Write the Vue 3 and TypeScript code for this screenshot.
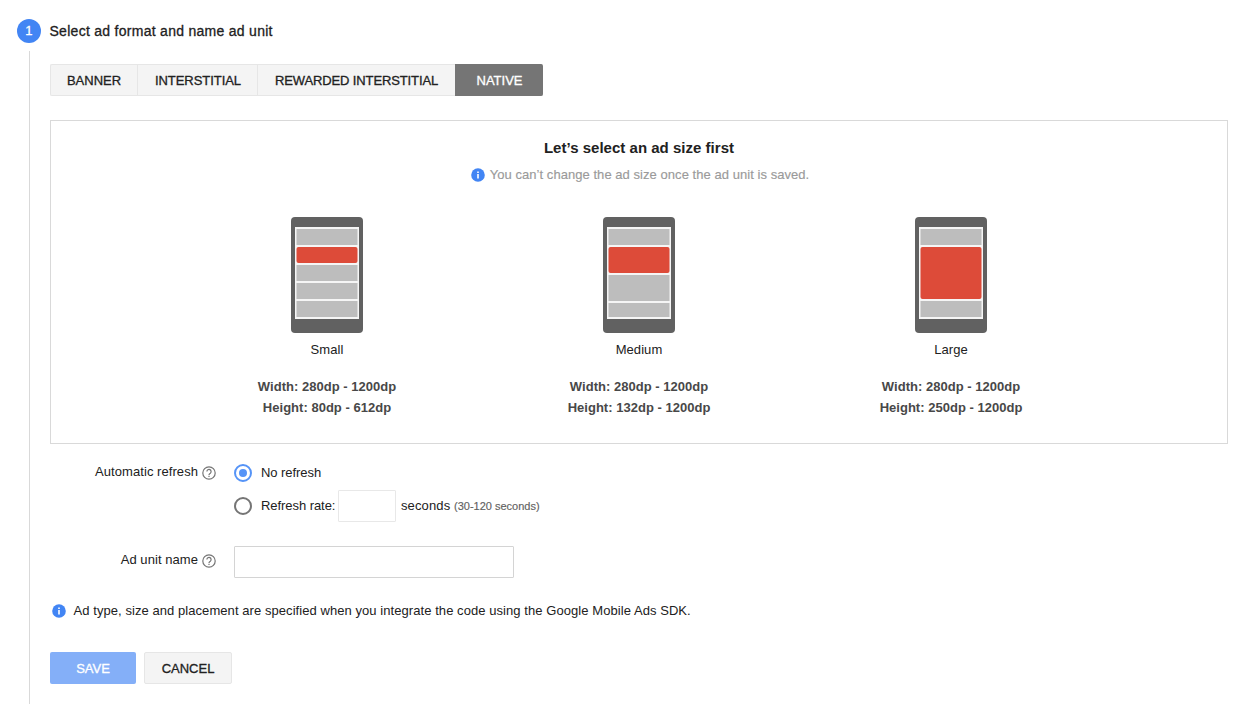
<script setup lang="ts">
import { ref } from 'vue'

interface Row { height: number; ad?: boolean }
interface AdSize { name: string; width: string; height: string; rows: Row[] }

const formats = [
  { id: 'banner', label: 'BANNER' },
  { id: 'interstitial', label: 'INTERSTITIAL' },
  { id: 'rewarded', label: 'REWARDED INTERSTITIAL' },
  { id: 'native', label: 'NATIVE' },
]
const selected = ref('native')

const sizes: AdSize[] = [
  {
    name: 'Small', width: '280dp - 1200dp', height: '80dp - 612dp',
    rows: [{ height: 16 }, { height: 16, ad: true }, { height: 16 }, { height: 16 }, { height: 16 }],
  },
  {
    name: 'Medium', width: '280dp - 1200dp', height: '132dp - 1200dp',
    rows: [{ height: 16 }, { height: 26, ad: true }, { height: 26 }, { height: 14 }],
  },
  {
    name: 'Large', width: '280dp - 1200dp', height: '250dp - 1200dp',
    rows: [{ height: 16 }, { height: 52, ad: true }, { height: 16 }],
  },
]

const refresh = ref('none')
const rate = ref('')
const unitName = ref('')
</script>

<template>
  <div class="page">
    <aside class="rail">
      <div class="badge">1</div>
      <div class="line"></div>
    </aside>
    <main class="content">
      <h1 class="title">Select ad format and name ad unit</h1>

      <div class="tabs">
        <button
          v-for="f in formats"
          :key="f.id"
          class="tab"
          :class="[f.id, { active: f.id === selected }]"
          @click="selected = f.id"
        >{{ f.label }}</button>
      </div>

      <section class="panel">
        <h2 class="panel-title">Let’s select an ad size first</h2>
        <p class="hint">
          <svg class="info" viewBox="0 0 14 14">
            <circle cx="7" cy="7" r="6.8" fill="#4285f4" />
            <path d="M6.2 3.5h1.6v1.5H6.2zM6.2 6.1h1.6v4.3H6.2z" fill="#fff" />
          </svg>
          <span>You can’t change the ad size once the ad unit is saved.</span>
        </p>
        <div class="sizes">
          <div v-for="s in sizes" :key="s.name" class="size">
            <div class="phone">
              <div class="screen">
                <div
                  v-for="(r, i) in s.rows"
                  :key="i"
                  class="row"
                  :class="{ ad: r.ad }"
                  :style="{ height: r.height + 'px' }"
                ></div>
              </div>
            </div>
            <div class="size-name">{{ s.name }}</div>
            <div class="dims">
              <div>Width: {{ s.width }}</div>
              <div>Height: {{ s.height }}</div>
            </div>
          </div>
        </div>
      </section>

      <div class="field refresh">
        <div class="label">
          <span>Automatic refresh</span>
          <svg class="help" viewBox="0 0 14 14">
            <circle cx="7" cy="7" r="6.2" fill="none" stroke="#757575" stroke-width="1.2" />
            <path d="M4.9 5.6a2.1 2.1 0 1 1 3.4 1.6C7.5 7.8 7 8 7 8.9" fill="none" stroke="#757575" stroke-width="1.2" />
            <path d="M6.4 9.8h1.2v1.2H6.4z" fill="#757575" />
          </svg>
        </div>
        <div class="options">
          <label class="option first" @click="refresh = 'none'">
            <span class="radio" :class="{ on: refresh === 'none' }"></span>
            <span class="option-text">No refresh</span>
          </label>
          <div class="option" @click="refresh = 'rate'">
            <span class="radio" :class="{ on: refresh === 'rate' }"></span>
            <span class="option-text rate-label">Refresh rate:</span>
            <input v-model="rate" class="rate-input" type="text" />
            <span class="option-text seconds">seconds</span>
            <span class="range">(30-120 seconds)</span>
          </div>
        </div>
      </div>

      <div class="field name">
        <div class="label">
          <span>Ad unit name</span>
          <svg class="help" viewBox="0 0 14 14">
            <circle cx="7" cy="7" r="6.2" fill="none" stroke="#757575" stroke-width="1.2" />
            <path d="M4.9 5.6a2.1 2.1 0 1 1 3.4 1.6C7.5 7.8 7 8 7 8.9" fill="none" stroke="#757575" stroke-width="1.2" />
            <path d="M6.4 9.8h1.2v1.2H6.4z" fill="#757575" />
          </svg>
        </div>
        <input v-model="unitName" class="name-input" type="text" />
      </div>

      <p class="note">
        <svg class="info" viewBox="0 0 14 14">
          <circle cx="7" cy="7" r="6.8" fill="#4285f4" />
          <path d="M6.2 3.5h1.6v1.5H6.2zM6.2 6.1h1.6v4.3H6.2z" fill="#fff" />
        </svg>
        <span>Ad type, size and placement are specified when you integrate the code using the Google Mobile Ads SDK.</span>
      </p>

      <div class="actions">
        <button class="save">SAVE</button>
        <button class="cancel">CANCEL</button>
      </div>
    </main>
  </div>
</template>

<style>
body {
  background: #fff;
  overflow: hidden;
}
</style>

<style scoped>
.page,
.page * {
  box-sizing: border-box;
}
.page {
  display: flex;
  width: 1258px;
  height: 707px;
  font: 13px/15px "Liberation Sans", Arial, sans-serif;
  letter-spacing: 0.06px;
  color: #212121;
  white-space: nowrap;
}
h1, h2, p {
  margin: 0;
}
button, input {
  font: inherit;
  letter-spacing: inherit;
  color: inherit;
  padding: 0;
  margin: 0;
  outline: none;
}
svg {
  display: block;
  flex: none;
}
.rail {
  width: 50px;
  padding: 19px 0 3px 17px;
  display: flex;
  flex-direction: column;
}
.badge {
  width: 24px;
  height: 24px;
  border-radius: 50%;
  background: #4285f4;
  color: #fff;
  line-height: 24px;
  text-align: center;
  -webkit-text-stroke: 0.3px;
}
.line {
  flex: 1;
  width: 1px;
  margin: 8px 0 0 12px;
  background: #d9d9d9;
}
.content {
  width: 1178px;
  padding-top: 23px;
}
.title {
  font-size: 14px;
  line-height: 16px;
  font-weight: 400;
  letter-spacing: 0.28px;
  text-indent: -0.5px;
  -webkit-text-stroke: 0.3px;
}
.tabs {
  display: flex;
  margin-top: 25px;
  height: 32px;
}
.tab {
  border: 1px solid #e6e6e6;
  border-right-width: 0;
  background: #f4f4f4;
  letter-spacing: 0;
  -webkit-text-stroke: 0.3px;
}
.banner {
  width: 87px;
  border-radius: 2px 0 0 2px;
}
.interstitial {
  width: 120px;
  padding-left: 1px;
  letter-spacing: -0.05px;
}
.rewarded {
  width: 198px;
  letter-spacing: -0.12px;
}
.native {
  width: 88px;
  border-radius: 0 2px 2px 0;
}
.tab.active {
  background: #757575;
  border-color: #757575;
  color: #fff;
}
.panel {
  margin-top: 24px;
  height: 324px;
  border: 1px solid #d9d9d9;
  padding-top: 18px;
}
.panel-title {
  font-size: 15px;
  line-height: 17px;
  letter-spacing: 0.02px;
  text-align: center;
}
.hint {
  display: flex;
  justify-content: center;
  align-items: center;
  gap: 5px;
  margin-top: 11px;
  padding-left: 2px;
  letter-spacing: 0.05px;
  color: #9a9a9a;
  -webkit-text-stroke: 0.15px;
}
.info {
  width: 14px;
  height: 14px;
  position: relative;
  top: 0.5px;
}
.sizes {
  display: flex;
  justify-content: center;
  margin-top: 35px;
}
.size {
  width: 312px;
  display: flex;
  flex-direction: column;
  align-items: center;
}
.phone {
  width: 72px;
  height: 116px;
  border-radius: 4px;
  background: #616161;
  padding: 10px 4px;
}
.screen {
  height: 92px;
  background: #f5f5f5;
  padding: 2px 1px 2px 2px;
  display: flex;
  flex-direction: column;
  gap: 2px;
}
.row {
  background: #bdbdbd;
  transform: translateX(-0.5px);
}
.row.ad {
  background: #dd4b39;
  border-radius: 2px;
}
.size-name {
  margin-top: 9px;
}
.dims {
  margin-top: 19px;
  line-height: 21px;
  font-weight: 700;
  letter-spacing: 0.02px;
  text-align: center;
  color: #484848;
}
.field {
  display: flex;
}
.label {
  width: 166px;
  display: flex;
  justify-content: flex-end;
  gap: 4px;
}
.help {
  width: 14px;
  height: 14px;
  margin-top: 2px;
}
.refresh {
  margin-top: 20px;
}
.options {
  margin-left: 18px;
}
.option {
  display: flex;
  align-items: center;
  height: 32px;
}
.option.first {
  height: 18px;
  margin-bottom: 8px;
}
.option-text {
  padding-bottom: 2px;
  letter-spacing: -0.06px;
}
.radio {
  width: 18px;
  height: 18px;
  border: 2px solid #757575;
  border-radius: 50%;
  margin-right: 9px;
  display: flex;
  align-items: center;
  justify-content: center;
}
.radio.on {
  border-color: #5694f7;
}
.radio.on::after {
  content: "";
  width: 8px;
  height: 8px;
  border-radius: 50%;
  background: #5694f7;
}
.rate-label {
  width: 77px;
}
.rate-input {
  width: 58px;
  height: 32px;
  border: 1px solid #e8e8e8;
  border-radius: 1px;
}
.seconds {
  margin-left: 5px;
  width: 53px;
  letter-spacing: 0.12px;
}
.range {
  font-size: 11px;
  letter-spacing: 0;
  color: #616161;
  -webkit-text-stroke: 0.15px;
}
.name {
  margin-top: 24px;
}
.name .label {
  padding-top: 6px;
}
.name-input {
  margin-left: 18px;
  width: 280px;
  height: 32px;
  border: 1px solid #d4d4d4;
  border-radius: 1px;
}
.note {
  display: flex;
  align-items: center;
  gap: 7.5px;
  margin: 25px 0 0 2px;
  letter-spacing: 0.065px;
}
.actions {
  display: flex;
  gap: 8px;
  margin-top: 34px;
}
.save,
.cancel {
  height: 32px;
  border-radius: 2px;
  letter-spacing: 0;
  -webkit-text-stroke: 0.3px;
}
.save {
  width: 86px;
  border: 0;
  background: #84aff8;
  color: #fff;
}
.cancel {
  width: 88px;
  border: 1px solid #e6e6e6;
  background: #f4f4f4;
}
</style>
